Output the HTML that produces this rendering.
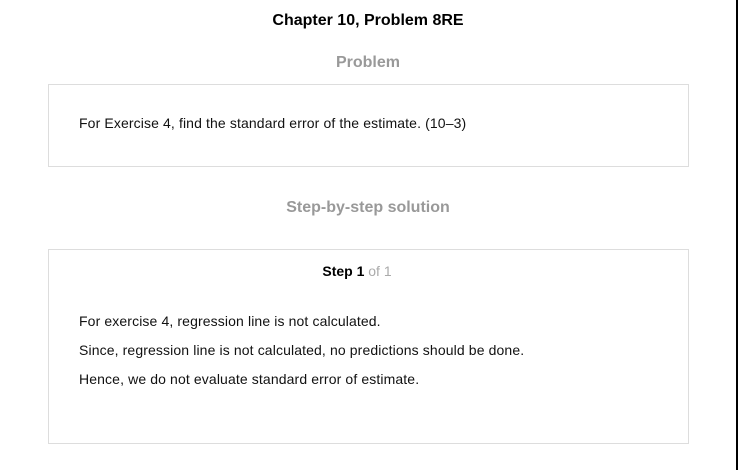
<!DOCTYPE html>
<html><head><style>
body{margin:0;width:738px;height:470px;background:#fff;font-family:"Liberation Sans",Arial,sans-serif;position:relative;overflow:hidden}
.r{position:absolute;right:0;top:0;width:2px;height:470px;background:#000}
.t{position:absolute;left:0;width:736px;text-align:center;font-weight:bold}
.box{position:absolute;left:48px;width:639px;border:1px solid #ddd}
.p{position:absolute;left:79px;font-size:14px;color:#111;line-height:16px;letter-spacing:0.12px}
</style></head><body>
<div class="r"></div>
<div class="t" style="top:12px;font-size:16px;color:#000">Chapter 10, Problem 8RE</div>
<div class="t" style="top:54px;font-size:16px;color:#999">Problem</div>
<div class="box" style="top:84px;height:81px"></div>
<div class="p" style="top:115px">For Exercise 4, find the standard error of the estimate. (10–3)</div>
<div class="t" style="top:199px;font-size:16px;color:#999">Step-by-step solution</div>
<div class="box" style="top:249px;height:193px"></div>
<div class="t" style="top:263px;font-size:14px;color:#000;left:-11px">Step 1 <span style="font-weight:normal;color:#aaa">of 1</span></div>
<div class="p" style="top:313px">For exercise 4, regression line is not calculated.</div>
<div class="p" style="top:342px">Since, regression line is not calculated, no predictions should be done.</div>
<div class="p" style="top:371px">Hence, we do not evaluate standard error of estimate.</div>
</body></html>
